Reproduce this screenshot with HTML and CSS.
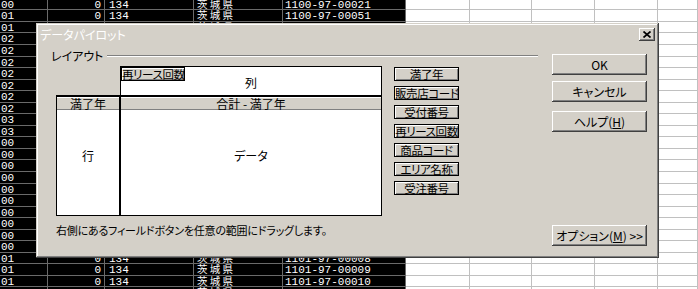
FILE: index.html
```html
<!DOCTYPE html>
<html lang="ja">
<head>
  <meta charset="UTF-8" />
  <meta name="viewport" content="width=device-width, initial-scale=1.0"/>
  <title>データパイロット</title>
  <link rel="stylesheet" href="styles.css">
</head>
<body>
  <div class="sheet" id="sheet"></div>

  <div class="dialog">
    <div class="titlebar">
      <span class="title">データパイロット</span>
      <button class="close-btn" title="閉じる">
        <svg width="8" height="7" viewBox="0 0 8 7">
          <path d="M0.5 0.5 L7.5 6.5 M7.5 0.5 L0.5 6.5" stroke="#000" stroke-width="1.7" fill="none"/>
        </svg>
      </button>
    </div>

    <div class="dialog-body">
      <div class="layout-group">
        <div class="group-label"><span>レイアウト</span></div>

        <div class="layout-main">
          <div class="pivot">
            <div class="col-area">
              <span class="field field-in">再リース回数</span>
              <span class="area-label">列</span>
            </div>
            <div class="pivot-lower">
              <div class="area-head">満了年</div>
              <div class="area-head">合計 - 満了年</div>
              <div class="area-box">行</div>
              <div class="area-box">データ</div>
            </div>
          </div>

          <div class="field-list">
            <span class="field">満了年</span>
            <span class="field">販売店コード</span>
            <span class="field">受付番号</span>
            <span class="field">再リース回数</span>
            <span class="field">商品コード</span>
            <span class="field">エリア名称</span>
            <span class="field">受注番号</span>
          </div>
        </div>

        <p class="hint">右側にあるフィールドボタンを任意の範囲にドラッグします。</p>
      </div>

      <div class="actions">
        <button class="btn">OK</button>
        <button class="btn">キャンセル</button>
        <button class="btn btn-help">ヘルプ(<u>H</u>)</button>
        <button class="btn btn-options">オプション(<u>M</u>) &gt;&gt;</button>
      </div>
    </div>
  </div>

  <script>
  // 背景のシート（選択範囲は黒で反転表示）
  const codes = ["00","01","01","02","02","02","02","02","02","02","03","03",
                 "00","00","00","00","00","00","00","00","00","00","01","01","01","01"];
  const sheet = document.getElementById("sheet");

  codes.forEach((code, i) => {
    let no;
    if (i < 22) {
      no = "1100-97-" + String(21 + i * 30).padStart(5, "0");
    } else {
      no = "1101-97-" + String(i - 14).padStart(5, "0");
    }
    const row = document.createElement("div");
    row.className = "row";
    row.innerHTML = `
      <span class="cell sel col-a">${code}</span>
      <span class="cell sel num">0</span>
      <span class="cell sel col-c">134</span>
      <span class="cell sel col-d">茨城県</span>
      <span class="cell sel col-e">${no}</span>
      <span class="cell"></span>
      <span class="cell"></span>
      <span class="cell"></span>
      <span class="cell"></span>
      <span class="cell"></span>
    `;
    sheet.appendChild(row);
  });
  </script>
</body>
</html>
```

FILE: styles.css
```css
* {
  box-sizing: border-box;
}
body {
  margin: 0;
  width: 698px;
  height: 289px;
  overflow: hidden;
  position: relative;
  background-color: #fff;
  font-family: "Noto Sans CJK JP", sans-serif;
  font-feature-settings: "palt";
  color: #000;
}

/* シート */
.sheet {
  margin-top: -1.2px;
}
.row {
  display: grid;
  grid-template-columns: 48px 57px 89px 89px 123px 64px 62px 63px 63px 1fr;
  height: 11.55px;
}
.cell {
  border-right: 1px solid #c0c0c0;
  border-bottom: 1px solid #c0c0c0;
  overflow: hidden;
  white-space: nowrap;
  font-family: "Liberation Mono", "Noto Sans CJK JP", monospace;
  font-feature-settings: normal;
  font-size: 11px;
  line-height: 11px;
  padding-top: 1px;
}
.cell.sel {
  background-color: #000;
  color: #fff;
  border-color: #6a6a6a;
}
.col-a {
  padding-left: 1px;
}
.num {
  text-align: right;
  padding-right: 3px;
}
.col-c {
  padding-left: 4px;
}
.cell.col-d {
  overflow: visible;
  padding-left: 3px;
  padding-top: 0;
  font-family: "Noto Sans CJK JP", sans-serif;
  font-size: 10.5px;
  letter-spacing: 2.2px;
  line-height: 10px;
}
.col-e {
  padding-left: 2px;
}

/* ダイアログ */
.dialog {
  position: absolute;
  left: 36px;
  top: 23px;
  width: 623px;
  height: 235px;
  padding: 2px 3px 3px 3px;
  display: flex;
  flex-direction: column;
  background-color: #d4d0c8;
  box-shadow: inset -1px -1px #404040, inset 1px 1px #d4d0c8, inset -2px -2px #808080, inset 2px 2px #fff;
}
.titlebar {
  height: 18px;
  display: flex;
  align-items: center;
  justify-content: space-between;
  padding-left: 1px;
}
.title {
  color: #fff;
  font-size: 12px;
}
.close-btn {
  width: 16px;
  height: 13px;
  margin: 0 1px 0 0;
  padding: 0;
  border: none;
  background-color: #d4d0c8;
  display: flex;
  align-items: center;
  justify-content: center;
  box-shadow: inset -1px -1px #404040, inset 1px 1px #fff, inset -2px -2px #808080;
}

.dialog-body {
  flex: 1;
  display: flex;
  gap: 14px;
  padding: 6px 9px 9px 9px;
}
.layout-group {
  width: 490px;
  display: flex;
  flex-direction: column;
}
.group-label {
  display: flex;
  align-items: center;
  height: 13px;
  font-size: 12px;
  line-height: 13px;
}
.group-label span {
  padding: 0 4px 0 3px;
}
.group-label::after {
  content: "";
  flex: 1;
  border-top: 1px solid #808080;
  border-bottom: 1px solid #fff;
}
.layout-main {
  display: flex;
  gap: 12px;
  margin-top: 4px;
  padding-left: 8px;
}

.pivot {
  width: 326px;
}
.col-area {
  position: relative;
  margin-left: 64px;
  width: 262px;
  height: 29px;
  border: 1px solid #000;
  border-bottom: none;
  background-color: #fff;
  display: flex;
  align-items: center;
  justify-content: center;
  font-size: 12px;
}
.col-area .field-in {
  position: absolute;
  left: 0;
  top: 0;
  width: 64px;
}
.area-label {
  padding-top: 2px;
}
.pivot-lower {
  display: grid;
  grid-template-columns: 62px 260px;
  grid-template-rows: 13px 105px;
  column-gap: 2px;
  background-color: #000;
  border: 1px solid #000;
  border-top-width: 2px;
}
.area-head {
  background-color: #d4d0c8;
  border-top: 1px solid #fff;
  border-bottom: 1px solid #808080;
  text-align: center;
  font-size: 12px;
  line-height: 11px;
}
.area-box {
  background-color: #fff;
  display: flex;
  align-items: center;
  justify-content: center;
  padding-bottom: 14px;
  font-size: 12px;
}

.field-list {
  display: flex;
  flex-direction: column;
  gap: 5px;
  margin-top: 1px;
  width: 65px;
}
.field {
  display: block;
  height: 14px;
  border: 1px solid #000;
  background-color: #d4d0c8;
  box-shadow: inset 1px 1px #fff, inset -1px -1px #808080;
  font-size: 11.5px;
  letter-spacing: -0.4px;
  line-height: 12px;
  text-align: center;
  white-space: nowrap;
  overflow: hidden;
}

.hint {
  margin: 8px 0 0 8px;
  font-size: 11px;
  letter-spacing: -0.2px;
  line-height: 12px;
}

.actions {
  width: 95px;
  display: flex;
  flex-direction: column;
  padding-top: 5px;
}
.btn {
  height: 21px;
  width: 95px;
  margin: 0;
  padding: 0;
  border: none;
  background-color: #d4d0c8;
  font-family: "Noto Sans CJK JP", sans-serif;
  font-feature-settings: "palt";
  font-size: 12px;
  color: #000;
  box-shadow: inset -1px -1px #404040, inset 1px 1px #fff, inset -2px -2px #808080;
}
.btn + .btn {
  margin-top: 6px;
}
.btn.btn-help {
  margin-top: 9px;
}
.btn.btn-options {
  margin-top: auto;
}
```
